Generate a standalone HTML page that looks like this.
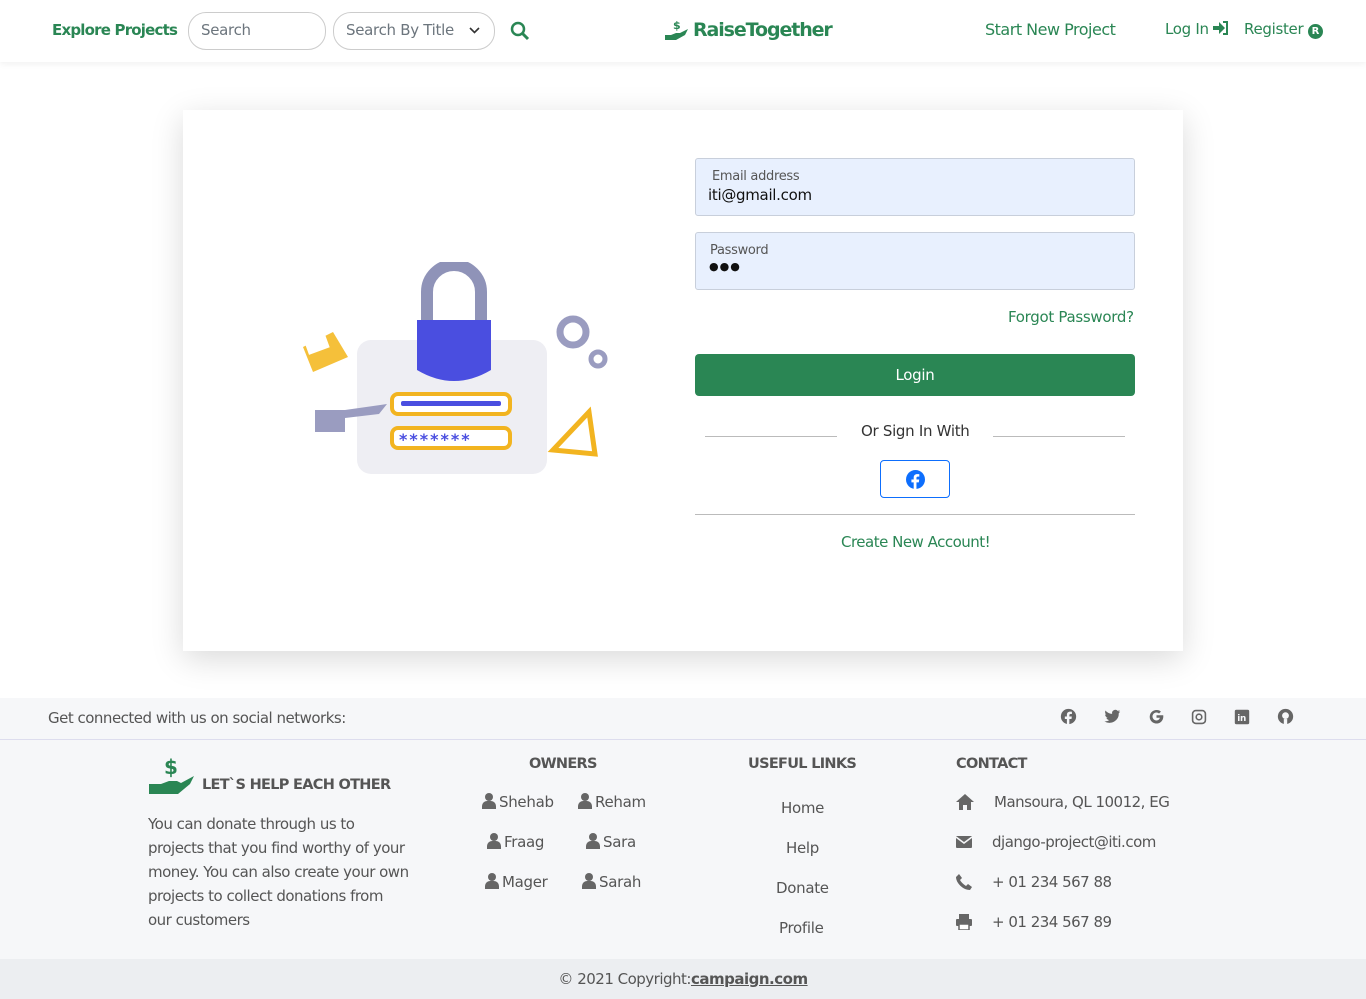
<!DOCTYPE html>
<html><head><meta charset="utf-8"><style>
*{box-sizing:border-box;margin:0;padding:0}
body{width:1366px;height:999px;overflow:hidden;background:#fff;font-family:"DejaVu Sans","Liberation Sans",sans-serif;font-size:15px;color:#444;position:relative;letter-spacing:-0.3px}
.a{position:absolute;white-space:nowrap}
.g{color:#2a8654}
nav{position:absolute;left:0;top:0;width:1366px;height:62px;background:#fff;box-shadow:0 2px 6px rgba(0,0,0,.06)}
.inp{position:absolute;border:1px solid #ccc;border-radius:18px;height:38px;top:12px;color:#6c757d;padding:8px 12px;font-size:15px}
.card{position:absolute;left:183px;top:110px;width:1000px;height:541px;background:#fff;box-shadow:0 8px 30px rgba(0,0,0,.15)}
.fld{position:absolute;left:695px;width:440px;height:58px;background:#e8f0fe;border:1px solid #c8cfdb;border-radius:3px}
.p svg{vertical-align:-2px;margin-right:3px}
.h{font-weight:bold;font-size:14.5px;letter-spacing:-0.7px;color:#555}
</style></head><body>
<nav>
<div class="a g" style="left:52px;top:21px;font-weight:bold;font-size:15px;letter-spacing:-0.8px">Explore Projects</div>
<div class="inp" style="left:188px;width:138px">Search</div>
<div class="inp" style="left:333px;width:162px">Search By Title <svg style="position:absolute;right:14px;top:14px" width="11" height="8" viewBox="0 0 11 8"><path d="M1 1l4.5 4.5L10 1" fill="none" stroke="#333" stroke-width="1.6"/></svg></div>
<svg class="a" style="left:510px;top:21px" width="20" height="20" viewBox="0 0 20 20"><circle cx="8" cy="8" r="6" fill="none" stroke="#2a8654" stroke-width="2.5"/><path d="M12 12l6 6" stroke="#2a8654" stroke-width="3"/></svg>
<svg class="a" style="left:664px;top:19px" width="26" height="24" viewBox="0 0 26 24"><text x="9" y="10" font-size="11" font-weight="bold" fill="#2a8654">$</text><path d="M1 16h6l5-2h4l8-4-3 6-9 5H1z" fill="#2a8654"/></svg>
<div class="a g" style="left:693px;top:19px;font-weight:bold;font-size:19px;letter-spacing:-1.1px">RaiseTogether</div>
<div class="a g" style="left:985px;top:20px;font-size:16px;letter-spacing:-0.5px">Start New Project</div>
<div class="a g" style="left:1165px;top:20px;font-size:15px">Log In <svg width="16" height="14" viewBox="0 0 16 14" style="vertical-align:-1px"><path d="M0 5h6V1l6 6-6 6V9H0z" fill="#2a8654"/><path d="M10 1h4v12h-4" fill="none" stroke="#2a8654" stroke-width="2"/></svg></div>
<div class="a g" style="left:1244px;top:20px;font-size:15px">Register <span style="display:inline-block;width:15px;height:15px;border-radius:50%;background:#2a8654;color:#fff;font-size:10px;text-align:center;line-height:15px;font-weight:bold">R</span></div>
</nav>
<div class="card"></div>
<svg class="a" style="left:295px;top:262px" width="320" height="220" viewBox="0 0 320 220">
<rect x="62" y="78" width="190" height="134" rx="14" fill="#eeeef3"/>
<path d="M132 60V30a27 27 0 0 1 54 0V60" fill="none" stroke="#8f93b8" stroke-width="12"/>
<path d="M122 58h74v50q-37 22-74 0z" fill="#4a4ee0"/>
<rect x="97" y="132" width="118" height="20" rx="6" fill="#fff" stroke="#f2b420" stroke-width="4"/>
<rect x="106" y="139" width="100" height="5" rx="2" fill="#4a4ee0"/>
<rect x="97" y="166" width="118" height="20" rx="6" fill="#fff" stroke="#f2b420" stroke-width="4"/>
<text x="104" y="183" font-size="16" fill="#4a4ee0" font-weight="bold" letter-spacing="2">*******</text>
<path d="M20 148h30l42-6-8 10 -34 4v14H20z" fill="#9a9cc0"/>
<path d="M8 85l30-15 15 25-35 15z" fill="#f5c03a"/><rect x="10" y="68" width="22" height="22" fill="#fff" transform="rotate(-20 20 80)"/>
<circle cx="278" cy="70" r="13" fill="none" stroke="#9a9cc0" stroke-width="7"/><circle cx="303" cy="97" r="7" fill="none" stroke="#9a9cc0" stroke-width="5"/>
<path d="M258 188l36-38 6 42z" fill="#fff" stroke="#f2b420" stroke-width="5"/>
</svg>
<div class="fld" style="top:158px"><div class="a" style="left:16px;top:10px;font-size:13px;color:#555">Email address</div><div class="a" style="left:12px;top:27px;font-size:15px;color:#111">iti@gmail.com</div></div>
<div class="fld" style="top:232px"><div class="a" style="left:14px;top:10px;font-size:13px;color:#555">Password</div><div class="a" style="left:13px;top:27px;font-size:11px;color:#111;letter-spacing:1px">&#9679;&#9679;&#9679;</div></div>
<div class="a g" style="left:1008px;top:308px">Forgot Password?</div>
<div class="a" style="left:695px;top:354px;width:440px;height:42px;background:#2a8654;border-radius:4px;color:#fff;text-align:center;line-height:42px">Login</div>
<div class="a" style="left:705px;top:436px;width:132px;border-top:1px solid #bbb"></div>
<div class="a" style="left:993px;top:436px;width:132px;border-top:1px solid #bbb"></div>
<div class="a" style="left:861px;top:422px;color:#333">Or Sign In With</div>
<div class="a" style="left:880px;top:460px;width:70px;height:38px;border:1px solid #0d6efd;border-radius:4px"><svg style="position:absolute;left:25px;top:9px" width="19" height="19" viewBox="0 0 20 20"><circle cx="10" cy="10" r="10" fill="#0d6efd"/><path d="M11 20v-7h2.5l.4-3H11V8.5c0-.9.3-1.5 1.5-1.5H14V4.4c-.3 0-1.2-.1-2.2-.1-2.2 0-3.7 1.3-3.7 3.8V10H5.7v3h2.4v7z" fill="#fff"/></svg></div>
<div class="a" style="left:695px;top:514px;width:440px;border-top:1px solid #bbb"></div>
<div class="a g" style="left:841px;top:533px;letter-spacing:-0.5px">Create New Account!</div>
<div class="a" style="left:0;top:698px;width:1366px;height:301px;background:#f6f7f9"></div>
<div class="a" style="left:0;top:739px;width:1366px;border-top:1px solid #dde"></div>
<div class="a" style="left:48px;top:709px;color:#555;letter-spacing:-0.5px">Get connected with us on social networks:</div>
<div class="a" style="left:1060px;top:708px;font-size:16px;color:#666">
<svg width="17" height="17" viewBox="0 0 20 20"><circle cx="10" cy="10" r="9" fill="#666"/><path d="M11 20v-7h2.5l.4-3H11V8.5c0-.9.3-1.5 1.5-1.5H14V4.4c-2-.3-5.9-.5-5.9 3.7V10H5.7v3h2.4v7z" fill="#f6f7f9"/></svg>
<svg style="margin-left:22px" width="17" height="17" viewBox="0 0 20 20"><path d="M19 4c-.7.3-1.4.5-2.2.6.8-.5 1.4-1.2 1.7-2.1-.8.4-1.6.7-2.4.9a3.8 3.8 0 0 0-6.5 3.5C6.4 6.7 3.6 5.2 1.8 2.9c-1 1.8-.4 4 1.2 5.1-.6 0-1.2-.2-1.7-.5 0 1.9 1.3 3.5 3.1 3.8-.6.2-1.1.2-1.7.1.5 1.5 1.9 2.6 3.6 2.7A7.7 7.7 0 0 1 .5 15.7 11 11 0 0 0 17.4 6c.7-.5 1.3-1.2 1.6-2z" fill="#666"/></svg>
<svg style="margin-left:22px" width="17" height="17" viewBox="0 0 20 20"><path d="M17 8.5H10v3h4c-.5 2-2 3.2-4 3.2a4.7 4.7 0 1 1 3-8.3l2.2-2.2A8 8 0 1 0 18 10c0-.5 0-1-.1-1.5z" fill="#666"/></svg>
<svg style="margin-left:22px" width="16" height="16" viewBox="0 0 20 20"><rect x="2" y="2" width="16" height="16" rx="4" fill="none" stroke="#666" stroke-width="2"/><circle cx="10" cy="10" r="3.5" fill="none" stroke="#666" stroke-width="2"/></svg>
<svg style="margin-left:22px" width="16" height="16" viewBox="0 0 20 20"><rect x="1" y="1" width="18" height="18" rx="2" fill="#666"/><text x="4" y="15" font-size="11" font-weight="bold" fill="#f6f7f9">in</text></svg>
<svg style="margin-left:22px" width="17" height="17" viewBox="0 0 20 20"><circle cx="10" cy="10" r="9" fill="#666"/><circle cx="10" cy="9" r="4" fill="#f6f7f9"/><rect x="8" y="13" width="4" height="7" fill="#f6f7f9"/></svg>
</div>
<svg class="a" style="left:148px;top:756px" width="48" height="42" viewBox="0 0 48 42"><text x="16" y="18" font-size="20" font-weight="bold" fill="#2a8654">$</text><path d="M1 28h12l8-3h8l4 2 13-7-4 8-12 10H1z" fill="#2a8654"/></svg>
<div class="a h" style="left:202px;top:777px">LET`S HELP EACH OTHER</div>
<div class="a" style="left:148px;top:812px;line-height:24px;color:#555;letter-spacing:-0.5px">You can donate through us to<br>projects that you find worthy of your<br>money. You can also create your own<br>projects to collect donations from<br>our customers</div>
<div class="a h" style="left:529px;top:756px">OWNERS</div>
<div class="p">
<div class="a" style="left:482px;top:793px;color:#555"><svg width="14" height="16" viewBox="0 0 14 16"><circle cx="7" cy="4" r="4" fill="#666"/><path d="M0 16v-3a5 5 0 0 1 5-5h4a5 5 0 0 1 5 5v3z" fill="#666"/></svg>Shehab</div>
<div class="a" style="left:578px;top:793px;color:#555"><svg width="14" height="16" viewBox="0 0 14 16"><circle cx="7" cy="4" r="4" fill="#666"/><path d="M0 16v-3a5 5 0 0 1 5-5h4a5 5 0 0 1 5 5v3z" fill="#666"/></svg>Reham</div>
<div class="a" style="left:487px;top:833px;color:#555"><svg width="14" height="16" viewBox="0 0 14 16"><circle cx="7" cy="4" r="4" fill="#666"/><path d="M0 16v-3a5 5 0 0 1 5-5h4a5 5 0 0 1 5 5v3z" fill="#666"/></svg>Fraag</div>
<div class="a" style="left:586px;top:833px;color:#555"><svg width="14" height="16" viewBox="0 0 14 16"><circle cx="7" cy="4" r="4" fill="#666"/><path d="M0 16v-3a5 5 0 0 1 5-5h4a5 5 0 0 1 5 5v3z" fill="#666"/></svg>Sara</div>
<div class="a" style="left:485px;top:873px;color:#555"><svg width="14" height="16" viewBox="0 0 14 16"><circle cx="7" cy="4" r="4" fill="#666"/><path d="M0 16v-3a5 5 0 0 1 5-5h4a5 5 0 0 1 5 5v3z" fill="#666"/></svg>Mager</div>
<div class="a" style="left:582px;top:873px;color:#555"><svg width="14" height="16" viewBox="0 0 14 16"><circle cx="7" cy="4" r="4" fill="#666"/><path d="M0 16v-3a5 5 0 0 1 5-5h4a5 5 0 0 1 5 5v3z" fill="#666"/></svg>Sarah</div>
</div>
<div class="a h" style="left:748px;top:756px">USEFUL LINKS</div>
<div class="a" style="left:781px;top:799px;color:#555">Home</div>
<div class="a" style="left:786px;top:839px;color:#555">Help</div>
<div class="a" style="left:776px;top:879px;color:#555">Donate</div>
<div class="a" style="left:779px;top:919px;color:#555">Profile</div>
<div class="a h" style="left:956px;top:756px">CONTACT</div>
<svg class="a" style="left:956px;top:794px" width="18" height="16" viewBox="0 0 18 16"><path d="M9 0l9 8h-3v8h-4v-5H7v5H3V8H0z" fill="#666"/></svg>
<div class="a" style="left:994px;top:793px;color:#555;letter-spacing:-0.5px">Mansoura, QL 10012, EG</div>
<svg class="a" style="left:956px;top:836px" width="16" height="12" viewBox="0 0 16 12"><rect width="16" height="12" rx="1" fill="#666"/><path d="M0 1l8 6 8-6" fill="none" stroke="#f6f7f9" stroke-width="1.5"/></svg>
<div class="a" style="left:992px;top:833px;color:#555;letter-spacing:-0.5px">django-project@iti.com</div>
<svg class="a" style="left:956px;top:874px" width="16" height="16" viewBox="0 0 16 16"><path d="M3 0l3 4-2 2c1 2 3 4 6 6l2-2 4 3-2 3C7 16 0 9 0 3z" fill="#666"/></svg>
<div class="a" style="left:992px;top:873px;color:#555;letter-spacing:-0.5px">+ 01 234 567 88</div>
<svg class="a" style="left:956px;top:914px" width="16" height="16" viewBox="0 0 16 16"><rect x="3" y="0" width="10" height="5" fill="#666"/><rect x="0" y="5" width="16" height="7" rx="1" fill="#666"/><rect x="3" y="10" width="10" height="6" fill="#fff" stroke="#666" stroke-width="1.5"/></svg>
<div class="a" style="left:992px;top:913px;color:#555;letter-spacing:-0.5px">+ 01 234 567 89</div>
<div class="a" style="left:0;top:959px;width:1366px;height:40px;background:#eceef1;text-align:center;line-height:40px;color:#555;letter-spacing:-0.5px">© 2021 Copyright:<b style="text-decoration:underline">campaign.com</b></div>
</body></html>
